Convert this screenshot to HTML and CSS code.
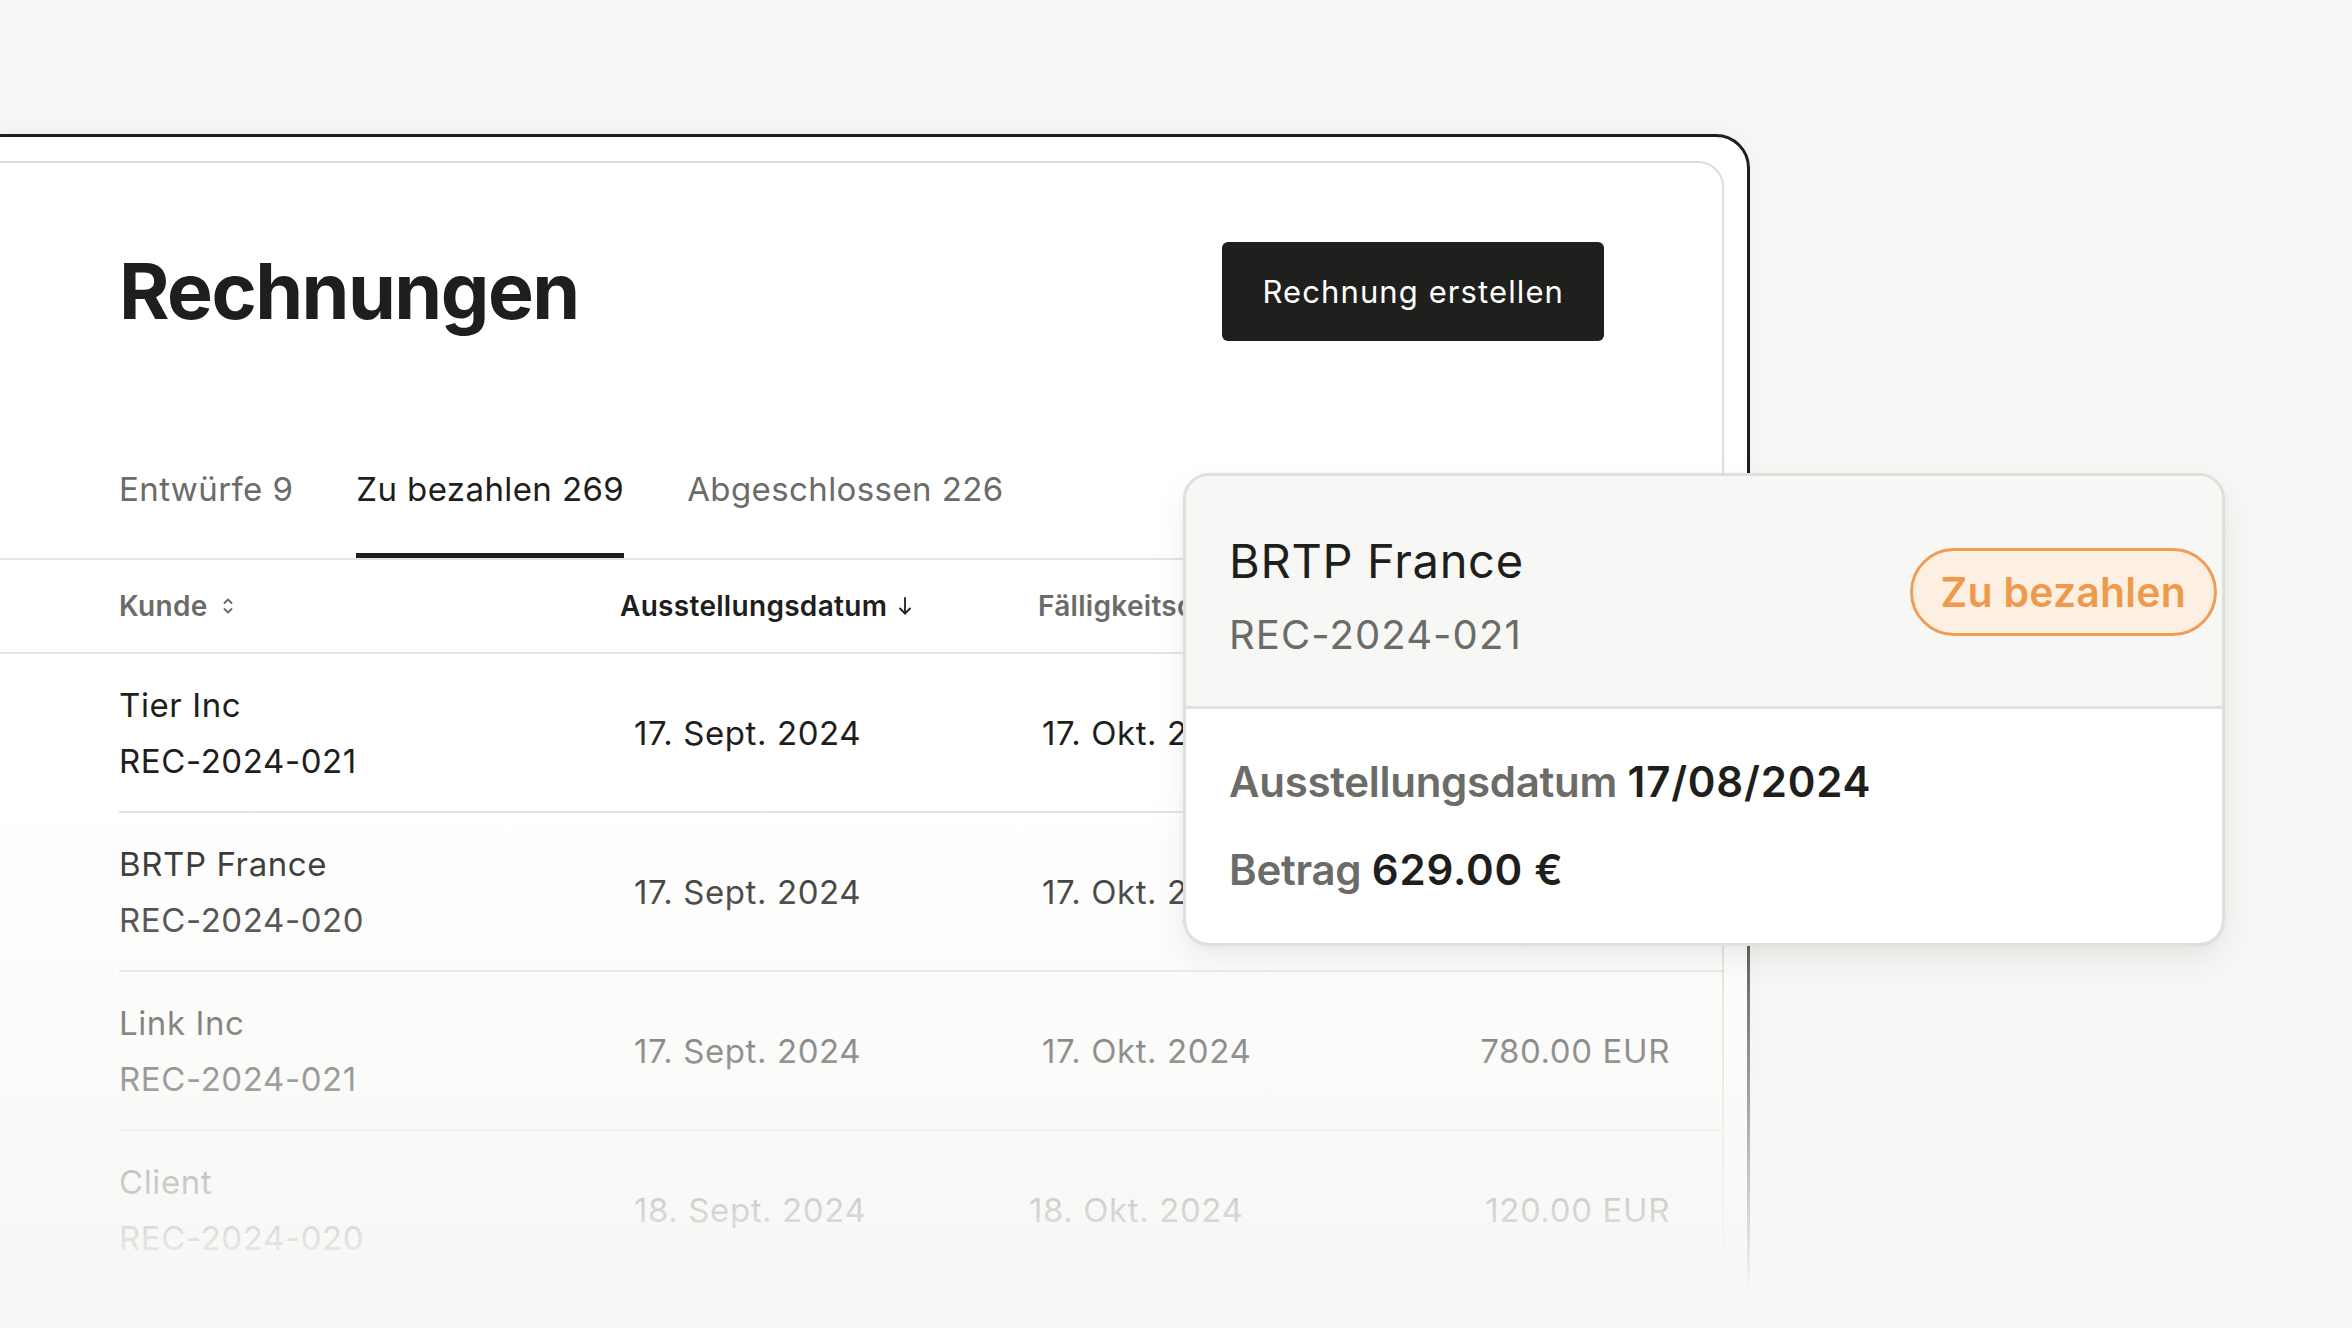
FILE: index.html
```html
<!DOCTYPE html>
<html lang="de">

<head>
    <meta charset="UTF-8">
    <meta name="viewport" content="width=device-width, initial-scale=1.0">
    <title>Rechnungen</title>
    <link rel="stylesheet" href="styles.css">
</head>

<body>
    <div class="frame">
        <div class="panel">
            <div class="page-head">
                <h1 class="title">Rechnungen</h1>
                <button class="btn-primary">Rechnung erstellen</button>
            </div>

            <nav class="tabs">
                <a class="tab">Entwürfe 9</a>
                <a class="tab active">Zu bezahlen 269</a>
                <a class="tab">Abgeschlossen 226</a>
            </nav>

            <div class="table">
                <div class="grid thead">
                    <div class="th">Kunde
                        <svg class="sort-icon" width="12" height="22" viewBox="0 0 12 22">
                            <path d="M2.5 8 L6 4.5 L9.5 8" />
                            <path d="M2.5 14 L6 17.5 L9.5 14" />
                        </svg>
                    </div>
                    <div class="th th-active">Ausstellungsdatum
                        <svg class="arrow-icon" width="16" height="22" viewBox="0 0 16 22">
                            <path d="M8 3 L8 18.5" />
                            <path d="M3 13.5 L8 18.5 L13 13.5" />
                        </svg>
                    </div>
                    <div class="th">Fälligkeitsdatum</div>
                    <div class="th amount">Betrag</div>
                </div>

                <div class="grid row">
                    <div class="client">
                        <span>Tier Inc</span>
                        <span>REC-2024-021</span>
                    </div>
                    <div class="date">17. Sept. 2024</div>
                    <div class="date due">17. Okt. 2024</div>
                    <div class="amount">1 450.00 EUR</div>
                </div>
                <div class="grid row">
                    <div class="client">
                        <span>BRTP France</span>
                        <span>REC-2024-020</span>
                    </div>
                    <div class="date">17. Sept. 2024</div>
                    <div class="date due">17. Okt. 2024</div>
                    <div class="amount">629.00 EUR</div>
                </div>
                <div class="grid row">
                    <div class="client">
                        <span>Link Inc</span>
                        <span>REC-2024-021</span>
                    </div>
                    <div class="date">17. Sept. 2024</div>
                    <div class="date due">17. Okt. 2024</div>
                    <div class="amount">780.00 EUR</div>
                </div>
                <div class="grid row">
                    <div class="client">
                        <span>Client</span>
                        <span>REC-2024-020</span>
                    </div>
                    <div class="date">18. Sept. 2024</div>
                    <div class="date due due-short">18. Okt. 2024</div>
                    <div class="amount">120.00 EUR</div>
                </div>
            </div>
        </div>
    </div>

    <!-- fades the bottom of the table into the page -->
    <div class="fade"></div>

    <div class="popover">
        <div class="popover-head">
            <div class="popover-title">
                <p class="popover-name">BRTP France</p>
                <p class="popover-ref">REC-2024-021</p>
            </div>
            <span class="badge">Zu bezahlen</span>
        </div>
        <div class="popover-body">
            <p><span class="label">Ausstellungsdatum</span> <span class="value">17/08/2024</span></p>
            <p><span class="label">Betrag</span> <span class="value">629.00 €</span></p>
        </div>
    </div>
</body>

</html>
```

FILE: styles.css
```css
* {
    margin: 0;
    padding: 0;
    box-sizing: border-box;
}

body {
    position: relative;
    width: 2352px;
    height: 1328px;
    overflow: hidden;
    background-color: #f7f7f5;
    font-family: "Inter", "Liberation Sans", sans-serif;
    color: #1e1e1c;
}

/* Device frame around the app */
.frame {
    margin-top: 134px;
    margin-left: -5px;
    width: 1755px;
    height: 1400px;
    padding: 24px 23px 0 0;
    background-color: #fff;
    border: 3px solid #1e1e1c;
    border-radius: 0 34px 0 0;
    box-shadow: 0 0 24px rgba(0, 0, 0, 0.04);
}

.panel {
    height: 100%;
    background-color: #fff;
    border: 2px solid #dcdcd8;
    border-radius: 0 26px 0 0;
}

.page-head {
    display: flex;
    justify-content: space-between;
    align-items: center;
    padding: 79px 118px 0 119px;
}

.title {
    font-size: 77px;
    font-weight: 700;
    line-height: 1;
    letter-spacing: -0.02em;
}

.btn-primary {
    height: 99px;
    padding: 0 40px;
    font-family: inherit;
    font-size: 31px;
    color: #fff;
    background-color: #1f1f1d;
    border: none;
    border-radius: 6px;
    letter-spacing: 1.1px;
}

/* Tabs */
.tabs {
    display: flex;
    gap: 63px;
    margin-top: 128px;
    padding-left: 119px;
    border-bottom: 2px solid #e4e4e0;
}

.tab {
    font-size: 33px;
    line-height: 40px;
    padding-bottom: 44px;
    color: #6b6b68;
    border-bottom: 5px solid transparent;
    letter-spacing: 0.4px;
}

.tab.active {
    color: #1e1e1c;
    border-bottom-color: #1e1e1c;
}

/* Table */
.grid {
    display: grid;
    grid-template-columns: 501px 418px 1fr 260px;
    align-items: center;
}

.thead {
    height: 94px;
    padding: 0 52px 0 119px;
    border-bottom: 2px solid #e4e4e0;
}

.th {
    display: flex;
    align-items: center;
    gap: 14px;
    font-size: 28px;
    font-weight: 600;
    color: #6b6b68;
    letter-spacing: 0.3px;
}

.th-active {
    gap: 10px;
    color: #1e1e1c;
}

.th.amount {
    justify-content: flex-end;
}

.sort-icon path,
.arrow-icon path {
    fill: none;
    stroke: currentColor;
    stroke-width: 1.8;
    stroke-linecap: round;
    stroke-linejoin: round;
}

.row {
    margin-left: 119px;
    height: 159px;
    padding-right: 52px;
    border-bottom: 2px solid #e4e4e0;
    font-size: 33px;
    letter-spacing: 0.6px;
}

.client span {
    display: block;
    line-height: 56px;
}

.date {
    padding-left: 14px;
}

.date.due {
    padding-left: 4px;
}

.date.due-short {
    padding-left: 0;
    margin-left: -9px;
}

.amount {
    text-align: right;
}

.fade {
    position: absolute;
    top: 0;
    left: 0;
    width: 100%;
    height: 100%;
    background: linear-gradient(to bottom, rgba(247, 247, 245, 0) 790px, #f7f7f5 1290px);
    pointer-events: none;
}

/* Invoice popover */
.popover {
    position: absolute;
    left: 1183px;
    top: 473px;
    width: 1042px;
    height: 473px;
    background-color: #fff;
    border: 3px solid #dfdfdc;
    border-radius: 26px;
    overflow: hidden;
    box-shadow: 0 14px 34px rgba(0, 0, 0, 0.07), 0 2px 6px rgba(0, 0, 0, 0.03);
}

.popover-head {
    display: flex;
    justify-content: space-between;
    align-items: flex-start;
    height: 233px;
    padding: 55px 5px 0 43px;
    background-color: #f7f7f5;
    border-bottom: 3px solid #e2e2df;
}

.popover-name {
    font-size: 47px;
    line-height: 60px;
    letter-spacing: 0.7px;
}

.popover-ref {
    margin-top: 14px;
    font-size: 40px;
    line-height: 60px;
    color: #6b6b68;
    letter-spacing: 1.1px;
}

.badge {
    margin-top: 17px;
    display: flex;
    align-items: center;
    height: 88px;
    padding: 0 28px;
    font-size: 41px;
    font-weight: 600;
    color: #ee9a4c;
    background-color: #fdf0e2;
    border: 3px solid #ef9d52;
    border-radius: 44px;
    letter-spacing: 0.2px;
}

.popover-body {
    padding: 29px 43px 0;
}

.popover-body p {
    font-size: 42px;
    line-height: 88px;
    font-weight: 600;
}

.popover-body .label {
    color: #6b6b68;
    letter-spacing: -0.3px;
}

.popover-body .value {
    color: #1e1e1c;
    letter-spacing: 0.8px;
}
```
